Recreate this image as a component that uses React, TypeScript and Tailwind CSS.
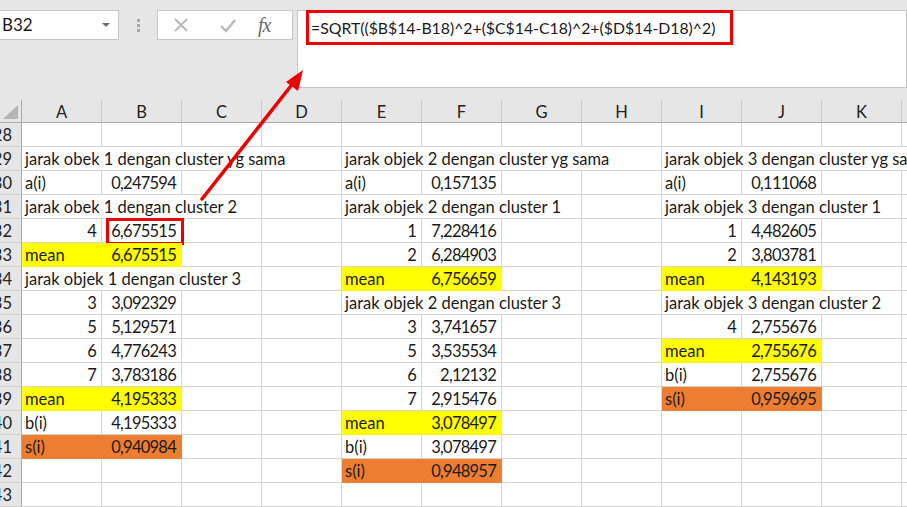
import React from "react";

type Cell = { t?: string; r?: boolean; span?: number; fill?: "y" | "o"; box?: boolean };

const COLS = ["A", "B", "C", "D", "E", "F", "G", "H", "I", "J", "K", "L"];

const spanClass: Record<number, string> = {
  1: "",
  3: "col-span-3",
  4: "col-span-4",
};

const fillClass = {
  y: "bg-[#ffff00] border-[#ffff00]",
  o: "bg-[#ed7d31] border-[#ed7d31]",
};

// rows 28..43, keyed by column index
const rows: Record<number, Cell>[] = [
  {},
  {
    0: { t: "jarak obek 1 dengan cluster yg sama", span: 4 },
    4: { t: "jarak objek 2 dengan cluster yg sama", span: 4 },
    8: { t: "jarak objek 3 dengan cluster yg sama", span: 4 },
  },
  {
    0: { t: "a(i)" }, 1: { t: "0,247594", r: true },
    4: { t: "a(i)" }, 5: { t: "0,157135", r: true },
    8: { t: "a(i)" }, 9: { t: "0,111068", r: true },
  },
  {
    0: { t: "jarak obek 1 dengan cluster 2", span: 3 },
    4: { t: "jarak objek 2 dengan cluster 1", span: 3 },
    8: { t: "jarak objek 3 dengan cluster 1", span: 3 },
  },
  {
    0: { t: "4", r: true }, 1: { t: "6,675515", r: true, box: true },
    4: { t: "1", r: true }, 5: { t: "7,228416", r: true },
    8: { t: "1", r: true }, 9: { t: "4,482605", r: true },
  },
  {
    0: { t: "mean", fill: "y" }, 1: { t: "6,675515", r: true, fill: "y" },
    4: { t: "2", r: true }, 5: { t: "6,284903", r: true },
    8: { t: "2", r: true }, 9: { t: "3,803781", r: true },
  },
  {
    0: { t: "jarak objek 1 dengan cluster 3", span: 3 },
    4: { t: "mean", fill: "y" }, 5: { t: "6,756659", r: true, fill: "y" },
    8: { t: "mean", fill: "y" }, 9: { t: "4,143193", r: true, fill: "y" },
  },
  {
    0: { t: "3", r: true }, 1: { t: "3,092329", r: true },
    4: { t: "jarak objek 2 dengan cluster 3", span: 3 },
    8: { t: "jarak objek 3 dengan cluster 2", span: 3 },
  },
  {
    0: { t: "5", r: true }, 1: { t: "5,129571", r: true },
    4: { t: "3", r: true }, 5: { t: "3,741657", r: true },
    8: { t: "4", r: true }, 9: { t: "2,755676", r: true },
  },
  {
    0: { t: "6", r: true }, 1: { t: "4,776243", r: true },
    4: { t: "5", r: true }, 5: { t: "3,535534", r: true },
    8: { t: "mean", fill: "y" }, 9: { t: "2,755676", r: true, fill: "y" },
  },
  {
    0: { t: "7", r: true }, 1: { t: "3,783186", r: true },
    4: { t: "6", r: true }, 5: { t: "2,12132", r: true },
    8: { t: "b(i)" }, 9: { t: "2,755676", r: true },
  },
  {
    0: { t: "mean", fill: "y" }, 1: { t: "4,195333", r: true, fill: "y" },
    4: { t: "7", r: true }, 5: { t: "2,915476", r: true },
    8: { t: "s(i)", fill: "o" }, 9: { t: "0,959695", r: true, fill: "o" },
  },
  {
    0: { t: "b(i)" }, 1: { t: "4,195333", r: true },
    4: { t: "mean", fill: "y" }, 5: { t: "3,078497", r: true, fill: "y" },
  },
  {
    0: { t: "s(i)", fill: "o" }, 1: { t: "0,940984", r: true, fill: "o" },
    4: { t: "b(i)" }, 5: { t: "3,078497", r: true },
  },
  {
    4: { t: "s(i)", fill: "o" }, 5: { t: "0,948957", r: true, fill: "o" },
  },
  {},
];

function GridRow({ num, data }: { num: number; data: Record<number, Cell> }) {
  const out: React.ReactNode[] = [];
  out.push(
    <div
      key="h"
      className="h-6 pt-[2px] flex items-center justify-end pr-[9px] overflow-hidden bg-[#e6e6e6] border-r border-b border-r-[#ababab] border-b-[#d0d0d0] text-[#222]"
    >
      {num}
    </div>
  );
  for (let c = 0; c < COLS.length; c++) {
    const cell = data[c];
    if (!cell) {
      out.push(<div key={c} className="h-6 border-r border-b border-[#d4d4d4] bg-white" />);
      continue;
    }
    const span = cell.span ?? 1;
    out.push(
      <div
        key={c}
        className={`relative h-6 pt-[2px] flex items-center whitespace-nowrap border-r border-b ${
          cell.fill ? fillClass[cell.fill] : "bg-white border-[#d4d4d4]"
        } ${spanClass[span]} ${cell.r ? "justify-end pr-[5px] tracking-[-0.75px]" : "pl-[3px]"}`}
      >
        {cell.t}
        {cell.box && (
          <div className="absolute left-[4px] -right-[3px] -top-[1px] -bottom-[3px] border-[3px] border-[#ee0000]" />
        )}
      </div>
    );
    c += span - 1;
  }
  return <>{out}</>;
}

export default function App() {
  return (
    <div
      className="relative w-[907px] h-[507px] overflow-hidden bg-[#e6e6e6] text-[16.5px] text-[#1a1a1a]"
      style={{ fontFamily: "Lato, 'Noto Sans', sans-serif" }}
    >
      {/* formula bar */}
      <div className="h-[100px] flex items-start pt-[10px]">
        <div className="w-[120px] h-[30px] -ml-px flex items-center justify-between bg-white border border-[#c6c6c6] pl-[2px] pr-[8px] text-[17px]">
          <span>B32</span>
          <span className="w-0 h-0 border-l-[4px] border-r-[4px] border-t-[4px] border-l-transparent border-r-transparent border-t-[#6d6d6d]" />
        </div>
        <div className="w-[38px] h-[30px] flex flex-col items-center justify-center gap-[2px]">
          <span className="w-[3px] h-[3px] bg-[#a6a6a6]" />
          <span className="w-[3px] h-[3px] bg-[#a6a6a6]" />
          <span className="w-[3px] h-[3px] bg-[#a6a6a6]" />
        </div>
        <div className="w-[136px] h-[30px] flex items-center bg-white border border-[#c6c6c6]">
          <svg width="46" height="28" viewBox="0 0 46 28" className="ml-[1px]">
            <path d="M16 8 L28 20 M28 8 L16 20" stroke="#b9b9b9" strokeWidth="2" fill="none" />
          </svg>
          <svg width="44" height="28" viewBox="0 0 44 28">
            <path d="M16 15 L21 20 L30 9" stroke="#b9b9b9" strokeWidth="2.4" fill="none" />
          </svg>
          <span
            className="ml-[9px] text-[20px] italic text-[#6b6b6b] tracking-[-1px]"
            style={{ fontFamily: "'Liberation Serif', serif" }}
          >
            fx
          </span>
        </div>
        <div className="ml-[4px] flex-1 h-[78px] bg-white border border-[#c6c6c6] pl-[8px]">
          <div className="w-[427px] h-[35px] -mt-px flex items-center pl-[2px] border-[3px] border-[#ee0000] text-[15.8px] whitespace-nowrap">
            =SQRT(($B$14-B18)^2+($C$14-C18)^2+($D$14-D18)^2)
          </div>
        </div>
      </div>

      {/* sheet */}
      <div className="grid grid-cols-[22px_repeat(12,80px)]">
        <div className="relative h-[23px] bg-[#e6e6e6] border-r border-b border-[#ababab]">
          <svg width="22" height="23" className="absolute left-0 top-0">
            <polygon points="3,19 18,19 18,5" fill="#b5b5b5" />
          </svg>
        </div>
        {COLS.map((c) => (
          <div
            key={c}
            className="h-[23px] pt-[2px] flex items-center justify-center bg-[#e6e6e6] border-r border-b border-r-[#c6c6c6] border-b-[#ababab] text-[#222]"
          >
            {c}
          </div>
        ))}
        {rows.map((r, i) => (
          <GridRow key={i} num={28 + i} data={r} />
        ))}
      </div>

      {/* annotation arrow */}
      <svg width="907" height="507" className="absolute left-0 top-0 pointer-events-none">
        <line x1="202" y1="199" x2="294" y2="82" stroke="#ee0000" strokeWidth="3.5" strokeLinecap="round" />
        <polygon points="303,70 286,82 298,91" fill="#ee0000" />
      </svg>
    </div>
  );
}
